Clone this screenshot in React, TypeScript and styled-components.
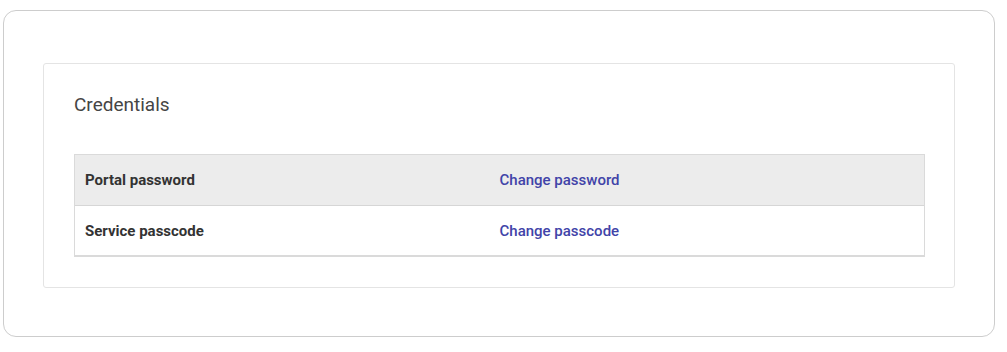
import styled, { createGlobalStyle } from "styled-components";

const GlobalStyle = createGlobalStyle`
  * {
    box-sizing: border-box;
  }
  body {
    margin: 0;
    background: #fff;
    font-family: Roboto, "Liberation Sans", sans-serif;
  }
`;

const Frame = styled.div`
  width: 992px;
  height: 327px;
  margin: 10px 0 0 3px;
  padding: 52px 39px 0 39px;
  border: 1px solid #cdcdcd;
  border-radius: 13px;
  background: #fff;
`;

const Card = styled.section`
  border: 1px solid #e4e4e4;
  border-radius: 3px;
  padding: 29px 29px 30px 30px;
`;

const Title = styled.h2`
  margin: 0 0 37px;
  font-size: 19px;
  line-height: 24px;
  font-weight: 400;
  color: #454545;
`;

const Table = styled.div`
  border: 1px solid #dadada;
  border-bottom-width: 2px;
`;

const Row = styled.div<{ $shaded?: boolean }>`
  display: grid;
  grid-template-columns: 1fr 1fr;
  align-items: center;
  height: ${(p) => (p.$shaded ? "51px" : "49px")};
  background: ${(p) => (p.$shaded ? "#ececec" : "#fff")};
  border-bottom: ${(p) => (p.$shaded ? "1px solid #d6d6d6" : "none")};
`;

const Label = styled.div`
  padding: 0 10px;
  font-size: 15px;
  font-weight: 700;
  color: #333;
`;

const Action = styled.a`
  font-size: 15px;
  font-weight: 500;
  color: #4143a8;
  text-decoration: none;
  cursor: pointer;
`;

const rows = [
  { label: "Portal password", action: "Change password" },
  { label: "Service passcode", action: "Change passcode" },
];

export default function App() {
  return (
    <>
      <GlobalStyle />
      <Frame>
        <Card>
          <Title>Credentials</Title>
          <Table>
            {rows.map((r, i) => (
              <Row key={r.label} $shaded={i === 0}>
                <Label>{r.label}</Label>
                <Action>{r.action}</Action>
              </Row>
            ))}
          </Table>
        </Card>
      </Frame>
    </>
  );
}
